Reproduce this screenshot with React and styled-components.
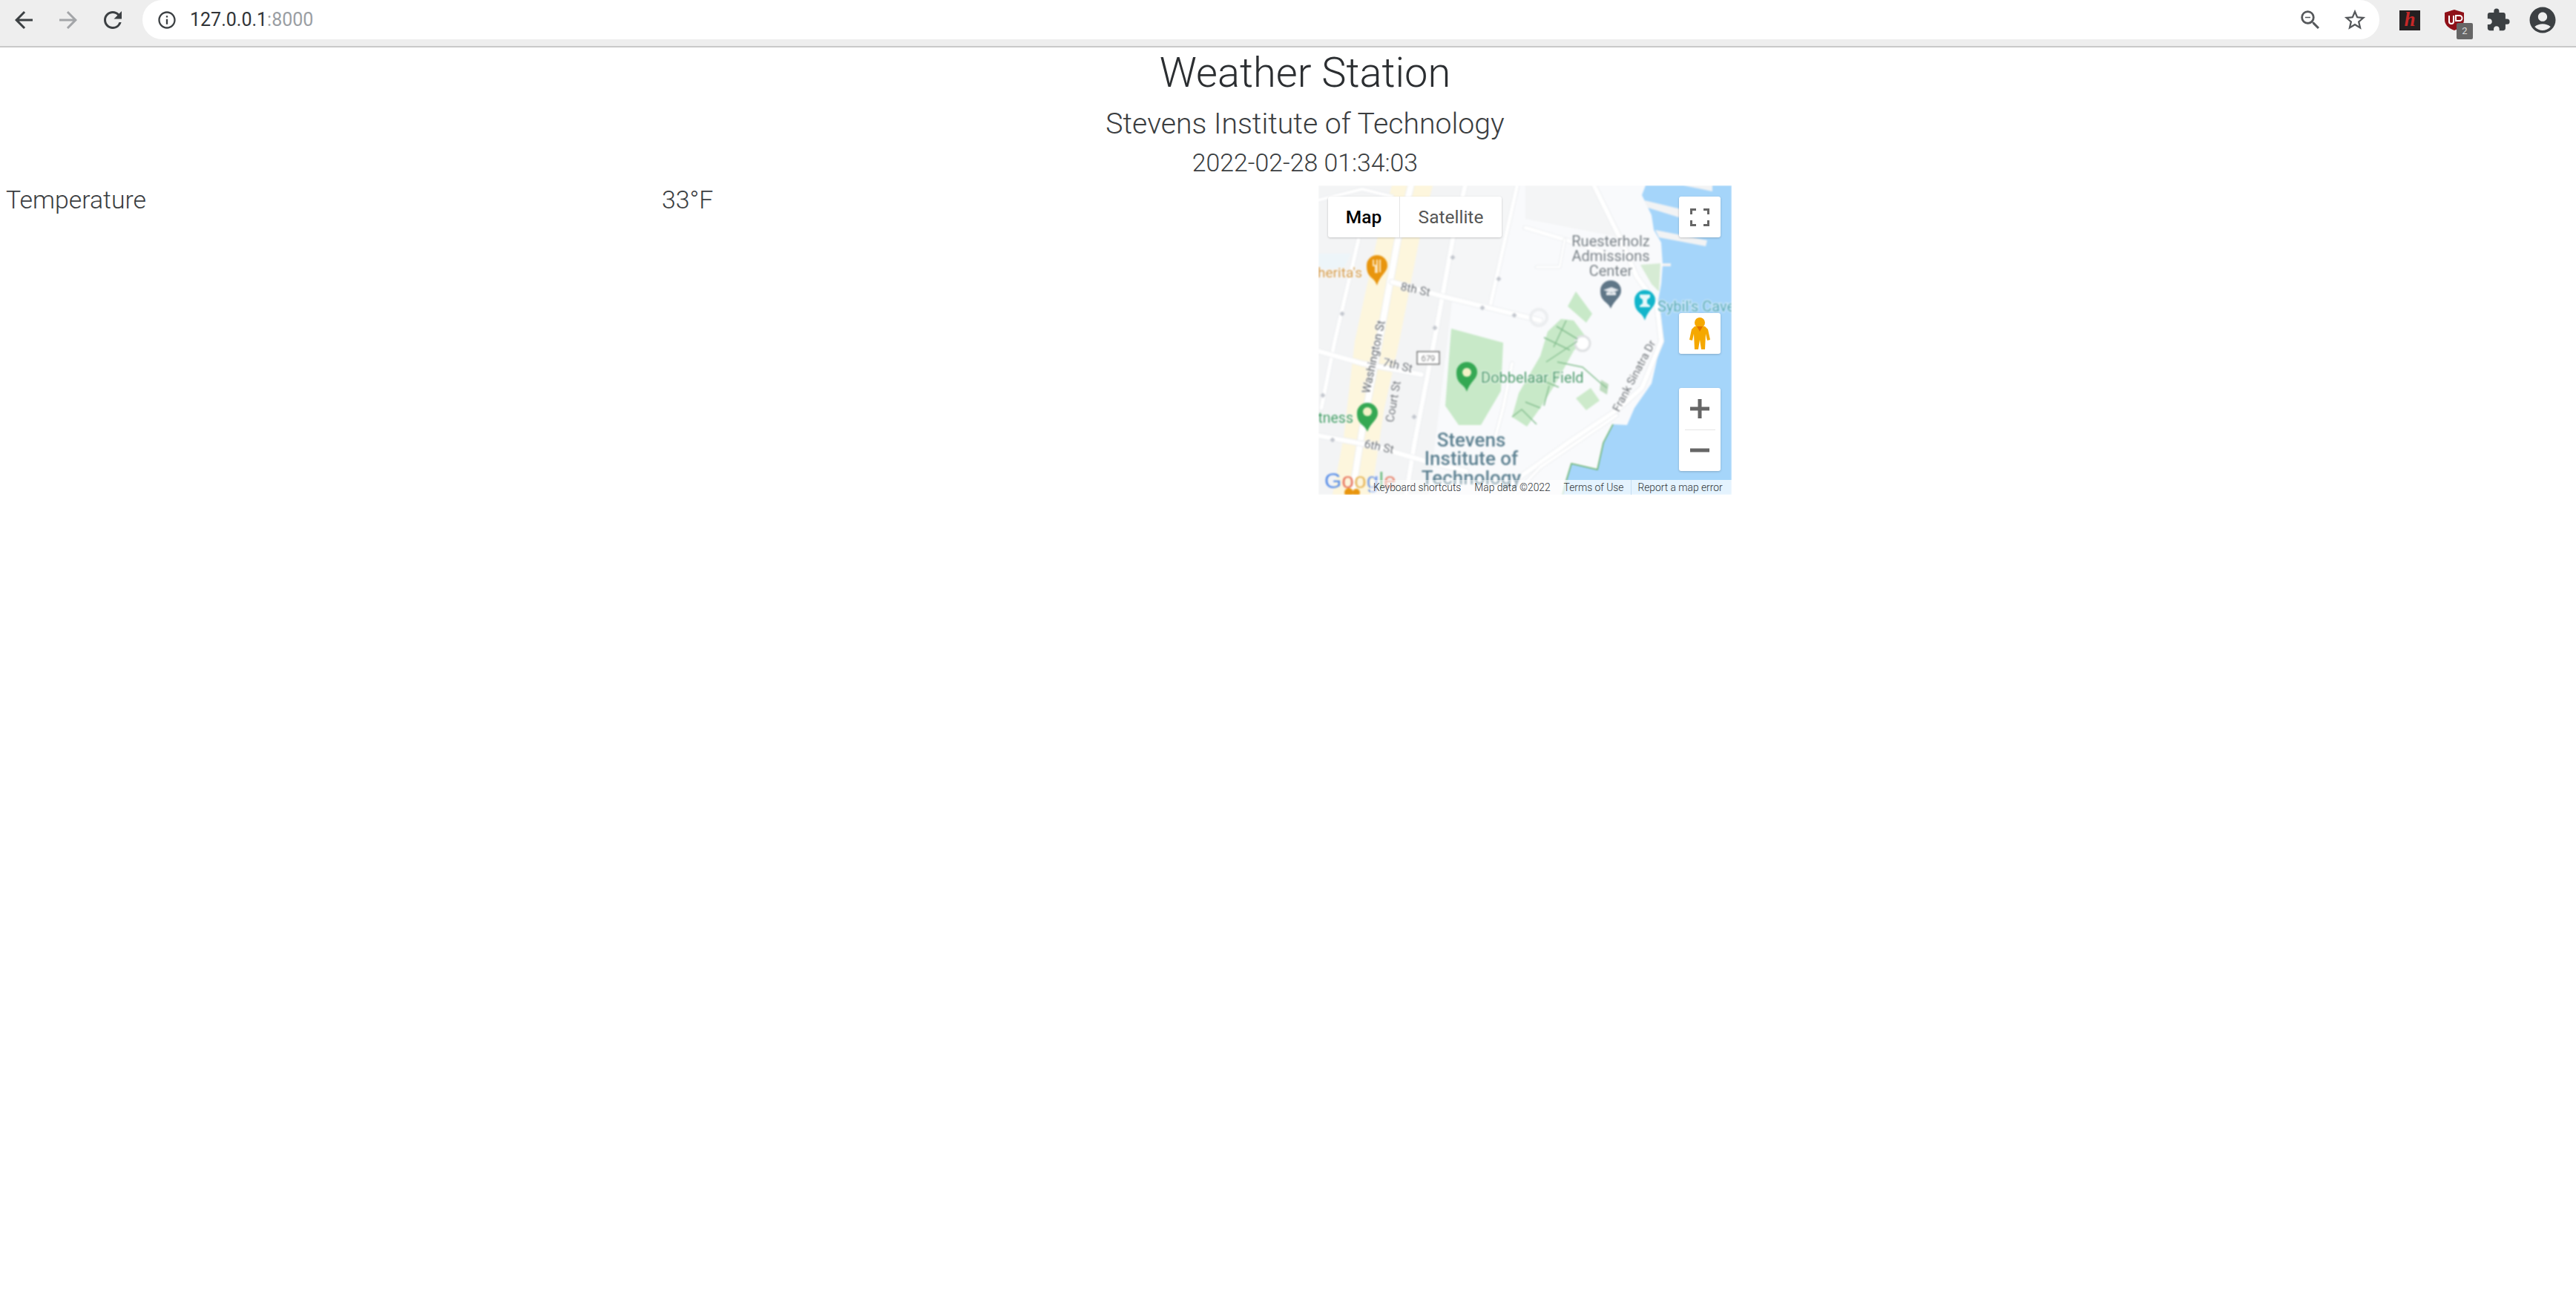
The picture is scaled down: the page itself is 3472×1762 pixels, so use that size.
import React from "react";
import styled, { createGlobalStyle } from "styled-components";
import {
  MdArrowBack,
  MdArrowForward,
  MdRefresh,
  MdInfoOutline,
  MdZoomOut,
  MdStarBorder,
  MdExtension,
  MdAccountCircle,
} from "react-icons/md";

const Global = createGlobalStyle`
  html, body { margin: 0; padding: 0; background: #fff; }
  body { font-family: Roboto, "Liberation Sans", sans-serif; overflow: hidden; }
`;

const Page = styled.div`
  width: 3472px;
  height: 1762px;
  display: flex;
  flex-direction: column;
  background: #fff;
`;

const Toolbar = styled.header`
  height: 62px;
  flex: none;
  display: flex;
  align-items: flex-start;
  background: #eeeeee;
  border-bottom: 2px solid #c9c9c9;
  box-sizing: content-box;
`;

const NavGroup = styled.nav`
  width: 192px;
  height: 54px;
  flex: none;
  display: flex;
  align-items: center;
  padding-left: 14px;
  gap: 24px;
  box-sizing: border-box;
`;

const ToolIcon = styled.span`
  width: ${(p) => p.$box || 36}px;
  height: 36px;
  flex: none;
  display: flex;
  align-items: center;
  justify-content: center;
  color: ${(p) => p.$color || "#3c4043"};
  font-size: ${(p) => p.$size || 36}px;
`;

const Omnibox = styled.div`
  width: 3015px;
  height: 53px;
  flex: none;
  display: flex;
  align-items: center;
  background: #fff;
  border-radius: 27px;
  padding: 0 15px 0 19px;
  box-sizing: border-box;
`;

const Url = styled.div`
  margin-left: 17px;
  flex: 1;
  font-size: 25px;
  font-weight: 400;
  color: #303336;
`;

const UrlPort = styled.span`
  color: #9a9ea3;
`;

const OmniActions = styled.div`
  display: flex;
  align-items: center;
  gap: 24px;
`;

const Extensions = styled.div`
  flex: 1;
  height: 54px;
  display: flex;
  align-items: center;
  padding-left: 27px;
`;

const HypoBadge = styled.div`
  width: 28px;
  height: 27px;
  flex: none;
  background: #231f20;
  color: #c62828;
  font: italic 700 27px/25px "Liberation Serif", serif;
  text-align: center;
`;

const ShieldWrap = styled.div`
  position: relative;
  width: 28px;
  height: 28px;
  flex: none;
  margin-left: 32px;
`;

const CountBadge = styled.span`
  position: absolute;
  left: 17px;
  top: 18px;
  width: 22px;
  height: 22px;
  background: #666;
  border-radius: 2px;
  color: #ddd;
  font-size: 13px;
  line-height: 22px;
  text-align: center;
`;

const PuzzleIcon = styled(ToolIcon)`
  margin-left: 27px;
`;

const AccountIcon = styled(ToolIcon)`
  margin-left: 21px;
  width: 42px;
  height: 42px;
`;

const Content = styled.main`
  flex: 1;
  color: #3a3d40;
  font-weight: 300;
`;

const Heading = styled.section`
  padding-left: 46px;
  text-align: center;
  height: 186px;
  box-sizing: border-box;
`;

const Title = styled.h1`
  margin: 0;
  padding-top: 4px;
  font-size: 56px;
  line-height: 60px;
  font-weight: 300;
  color: #2b2e31;
`;

const Subtitle = styled.h2`
  margin: 0;
  padding-top: 13px;
  font-size: 39.2px;
  line-height: 52px;
  font-weight: 300;
`;

const Stamp = styled.div`
  font-size: 33.8px;
  line-height: 54px;
  font-weight: 300;
`;

const Row = styled.section`
  display: grid;
  grid-template-columns: 884px 885px 557px;
  padding-left: 8px;
`;

const Cell = styled.div`
  font-size: 33.8px;
  line-height: 40px;
  font-weight: 300;
`;

const MapFrame = styled.div`
  position: relative;
  width: 557px;
  height: 417px;
  overflow: hidden;
  font-family: Roboto, sans-serif;
`;

const MapCanvas = styled.svg`
  display: block;
  width: 557px;
  height: 417px;
  filter: blur(0.9px);
  font-family: Roboto, sans-serif;
`;

const Card = styled.div`
  position: absolute;
  background: #fff;
  border-radius: 3px;
  box-shadow: 0 1px 3px rgba(0, 0, 0, 0.2);
  display: flex;
  align-items: center;
  justify-content: center;
`;

const TypeControl = styled(Card)`
  left: 13px;
  top: 15px;
  width: 234px;
  height: 55px;
`;

const TypeTab = styled.div`
  height: 100%;
  display: flex;
  align-items: center;
  justify-content: center;
  width: ${(p) => p.$w}px;
  font-size: 24.5px;
  font-weight: ${(p) => (p.$active ? 500 : 400)};
  color: ${(p) => (p.$active ? "#000" : "#565656")};
  border-right: ${(p) => (p.$active ? "1px solid #e6e6e6" : "none")};
  box-sizing: border-box;
`;

const FullscreenBtn = styled(Card)`
  left: 486px;
  top: 15px;
  width: 56px;
  height: 55px;
`;

const PegmanBtn = styled(Card)`
  left: 486px;
  top: 172px;
  width: 56px;
  height: 55px;
`;

const ZoomControl = styled(Card)`
  left: 486px;
  top: 273px;
  width: 56px;
  height: 112px;
  flex-direction: column;
`;

const ZoomKey = styled.div`
  flex: 1;
  width: 100%;
  display: flex;
  align-items: center;
  justify-content: center;
`;

const ZoomRule = styled.div`
  width: 41px;
  height: 1px;
  background: #e6e6e6;
`;

const Attribution = styled.div`
  position: absolute;
  left: 70px;
  right: 0;
  bottom: 0;
  height: 20px;
  display: flex;
  align-items: center;
  font-size: 13.8px;
  color: #2f3336;
  white-space: nowrap;
`;

const AttrItem = styled.span`
  height: 100%;
  flex: ${(p) => (p.$grow ? 1 : "none")};
  display: flex;
  align-items: center;
  padding: 0 ${(p) => p.$pad ?? 8}px 0 ${(p) => p.$padL ?? 4}px;
  background: rgba(255, 255, 255, ${(p) => p.$alpha ?? 0.6});
  border-left: ${(p) => (p.$rule ? "1px solid #c6def2" : "none")};
`;

const Pin = ({ x, y, tip, color, children }) => (
  <g>
    <path
      d={`M${x - 14} ${y} a14 14 0 1 1 28 0 c0 9 -10 13 -14 ${tip - y} c-4 ${14 - (tip - y)} -14 ${-9} -14 ${-(tip - y)}z`}
      fill={color}
    />
    {children}
  </g>
);

const Label = ({ x, y, size = 20, color, anchor = "start", rotate, weight = 400, children }) => (
  <text
    x={x}
    y={y}
    fontSize={size}
    fontWeight={weight}
    fill={color}
    textAnchor={anchor}
    stroke="#fff"
    strokeWidth="2"
    strokeOpacity=".7"
    paintOrder="stroke"
    transform={rotate ? `rotate(${rotate} ${x} ${y})` : undefined}
  >
    {children}
  </text>
);

const Road = ({ d, w = 7 }) => (
  <g fill="none" strokeLinecap="round" strokeLinejoin="round">
    <path d={d} stroke="#eceef0" strokeWidth={w + 2} />
    <path d={d} stroke="#fff" strokeWidth={w} />
  </g>
);

const MapDrawing = () => (
  <MapCanvas viewBox="1 0 557 417">
    <rect x="0" y="0" width="560" height="417" fill="#f9fafc" />
    {/* city blocks */}
    <polygon points="0,0 200,0 150,417 0,417" fill="#f3f4f5" />
    <polygon points="200,0 270,0 233,160 172,150" fill="#f5f6f7" />
    <polygon points="280,0 370,0 407,70 280,45" fill="#f4f5f6" />
    {/* yellow commercial strip */}
    <polygon points="100,0 155,0 137,73 110,210 90,300 72,417 20,417 35,340 50,210 80,73" fill="#fdf6dd" />
    <polygon points="0,92 45,92 35,112 0,112" fill="#edf5f9" />
    {/* water */}
    <polygon
      points="442,0 437,13 450,40 453,60 463,77 465,107 463,133 455,177 463,210 450,267 427,300 417,323 398,322 385,347 377,383 342,375 335,398 330,417 560,417 560,0"
      fill="#a5d5fa"
    />
    <polygon points="493,0 532,0 532,8" fill="#f2f3f4" />
    <polygon points="440,20 490,32 490,44 445,30" fill="#f2f3f4" />
    <polygon points="455,60 525,74 523,82 460,70" fill="#f2f3f4" />
    <polygon points="465,105 476,105 476,109 465,109" fill="#f2f3f4" />
    <path d="M398 322 L385 347 L377 383 L342 375 L335 398 L330 417" fill="none" stroke="#68b36f" strokeWidth="1.6" />
    {/* parks */}
    <polygon points="180,193 250,212 247,277 220,323 190,323 172,297" fill="#c8e9c8" />
    <polygon points="337,163 348,143 370,173 362,185" fill="#c8e9c8" />
    <polygon points="435,107 462,105 460,143 450,133" fill="#d6ebd4" />
    <polygon points="310,197 328,180 345,182 362,205 345,223 322,265 300,300 282,325 262,312 271,280 300,230" fill="#c8e9c8" />
    <polygon points="348,287 368,273 380,290 362,303" fill="#cdeacb" />
    <polygon points="382,262 392,268 390,282 380,276" fill="#bfdcbf" />
    {/* streets */}
    <Road d="M127 -5 L108 73 L83 210 L60 330 L45 425" w={8} />
    <Road d="M200 -5 L182 73 L157 210 L130 350 L118 425" w={6} />
    <Road d="M270 -5 L233 160" w={5} />
    <Road d="M55 73 L23 210 L5 300" w={5} />
    <Road d="M0 20 L60 5 L100 15" w={4} />
    <Road d="M100 130 L170 150 L280 177 L300 182" w={6} />
    <Road d="M0 223 L60 240 L140 255" w={6} />
    <Road d="M0 337 L70 350 L150 373 L200 385" w={6} />
    <Road d="M280 57 L333 73 L400 95" w={5} />
    <Road d="M333 73 L326 110 L295 110" w={3} />
    <Road d="M370 -5 L407 70 L430 123 L457 160 L463 210 L437 273 L403 303 L340 345 L270 395 L250 417" w={6} />
    <Road d="M403 310 L300 380 L265 417" w={4} />
    <Road d="M262 240 L250 300 L238 345" w={4} />
    <circle cx="357" cy="213" r="10" fill="#fff" stroke="#dfe1e3" strokeWidth="3" />
    <circle cx="298" cy="178" r="11" fill="none" stroke="#eceef0" strokeWidth="4" />
    <path d="M322 190 L350 207 M335 182 L318 218 M305 205 L340 222 M323 238 L357 245 L382 267 L390 273 M308 238 L350 210 M300 262 L325 272 M312 270 L305 297 M262 312 L275 302 L295 322 M300 300 L280 292" fill="none" stroke="#86bf90" strokeWidth="1.5" />
    {/* direction marks */}
    <g fill="#c3c7ce">
      {[[182, 97], [244, 126], [222, 165], [265, 175], [158, 192], [33, 173], [130, 312], [20, 343], [7, 283]].map(([x, y]) => (
        <rect key={`${x}-${y}`} x={x - 2.5} y={y - 2.5} width="5" height="5" transform={`rotate(45 ${x} ${y})`} />
      ))}
    </g>
    {/* street labels */}
    <Label x={111} y={141} size={15.5} color="#6a6f75" rotate={12}>8th St</Label>
    <Label x={70} y={281} size={15.5} color="#5e6369" rotate={-78}>Washington St</Label>
    <Label x={87} y={243} size={15.5} color="#6a6f75" rotate={13}>7th St</Label>
    <Label x={102} y={320} size={15.5} color="#6a6f75" rotate={-80}>Court St</Label>
    <Label x={62} y={353} size={15.5} color="#6a6f75" rotate={12}>6th St</Label>
    <Label x={406} y={306} size={15} color="#6a6f75" rotate={-62}>Frank Sinatra Dr</Label>
    <rect x="134" y="224" width="30" height="17" fill="#fff" stroke="#555" strokeWidth="1.2" />
    <text x="149" y="237" fontSize="11" textAnchor="middle" fill="#444">679</text>
    {/* POIs */}
    <Label x={60} y={124} size={19} color="#d49a48" anchor="end">Margherita's</Label>
    <Pin x={80} y={108} tip={135} color="#e8950e">
      <path d="M75 100 v8 h3 v9 h2 v-17 M84 100 v17" fill="none" stroke="#fde7c0" strokeWidth="2" />
    </Pin>
    <Label x={395} y={82} size={20} color="#767e85" anchor="middle">Ruesterholz</Label>
    <Label x={395} y={102} size={20} color="#767e85" anchor="middle">Admissions</Label>
    <Label x={395} y={122} size={20} color="#767e85" anchor="middle">Center</Label>
    <Pin x={395} y={142} tip={166} color="#5f7687">
      <path d="M385 141 L396 137 L406 141 L396 145z M389 144 v4 h13 v-4" fill="#e6eaee" />
    </Pin>
    <Label x={458} y={170} size={20} color="#4fa6b4">Sybil's Cave</Label>
    <Pin x={441} y={155} tip={182} color="#12b5cb">
      <path d="M434 147 h14 v4 l-4 3 v5 l4 3 v2 h-14 v-2 l4 -3 v-5 l-4 -3z" fill="#e6f8fa" />
    </Pin>
    <Label x={220} y={266} size={20} color="#4c9a6c">Dobbelaar Field</Label>
    <Pin x={201} y={252} tip={278} color="#34a853">
      <circle cx="201" cy="252" r="6" fill="#f4f2c8" />
    </Pin>
    <Label x={48} y={320} size={19.5} color="#3f9a63" anchor="end">Fitness</Label>
    <Pin x={67} y={307} tip={332} color="#34a853">
      <circle cx="67" cy="305" r="6" fill="#f4f2c8" />
    </Pin>
    <Label x={207} y={352} size={26} color="#5b7f90" anchor="middle" weight={500}>Stevens</Label>
    <Label x={207} y={377} size={26} color="#5b7f90" anchor="middle" weight={500}>Institute of</Label>
    <Label x={207} y={403} size={26} color="#5b7f90" anchor="middle" weight={500}>Technology</Label>
    {/* logo */}
    <text x="9" y="408" fontSize="30" fontWeight="500" fontFamily="'Liberation Sans', sans-serif">
      <tspan fill="#5a8fe8">G</tspan>
      <tspan fill="#e8765f">o</tspan>
      <tspan fill="#e8b95f">o</tspan>
      <tspan fill="#7a9fe8">g</tspan>
      <tspan fill="#6cbb7f">l</tspan>
      <tspan fill="#e8866f">e</tspan>
    </text>
    <circle cx="42" cy="414" r="6" fill="#e8950e" />
    <circle cx="52" cy="414" r="5" fill="#e8950e" />
  </MapCanvas>
);

const Pegman = () => (
  <svg width="30" height="44" viewBox="0 0 30 44">
    <circle cx="15" cy="7" r="7" fill="#f5a800" />
    <path d="M8 12 h14 l4 4 l3 14 l-4 1 l-2 -9 l-1 21 h-5 l-2 -13 l-2 13 h-5 l-1 -21 l-2 9 l-4 -1 l3 -14z" fill="#f5a800" />
    <path d="M11 12 h8 l-4 7z" fill="#e37400" />
  </svg>
);

const Corners = () => (
  <svg width="26" height="24" viewBox="0 0 26 24" fill="none" stroke="#666" strokeWidth="3">
    <path d="M1.5 8 V1.5 H8 M18 1.5 H24.5 V8 M24.5 16 V22.5 H18 M8 22.5 H1.5 V16" />
  </svg>
);

const Shield = () => (
  <svg width="28" height="28" viewBox="0 0 28 28">
    <path d="M14 0 L27 4 V14 C27 21 20 26 14 28 C8 26 1 21 1 14 V4z" fill="#8f1018" />
    <path d="M7 8 v8 a3 3 0 0 0 6 0 v-8" fill="none" stroke="#fff" strokeWidth="2" />
    <path d="M16 8 h5 a3 3 0 0 1 0 7 h-5z" fill="none" stroke="#fff" strokeWidth="2" />
  </svg>
);

export default function App() {
  return (
    <Page>
      <Global />
      <Toolbar>
        <NavGroup>
          <ToolIcon><MdArrowBack /></ToolIcon>
          <ToolIcon $color="#a3a5a8"><MdArrowForward /></ToolIcon>
          <ToolIcon><MdRefresh /></ToolIcon>
        </NavGroup>
        <Omnibox>
          <ToolIcon $size={28} $box={28}><MdInfoOutline /></ToolIcon>
          <Url>127.0.0.1<UrlPort>:8000</UrlPort></Url>
          <OmniActions>
            <ToolIcon $size={34} $color="#55585b"><MdZoomOut /></ToolIcon>
            <ToolIcon $size={34} $color="#55585b"><MdStarBorder /></ToolIcon>
          </OmniActions>
        </Omnibox>
        <Extensions>
          <HypoBadge>h</HypoBadge>
          <ShieldWrap>
            <Shield />
            <CountBadge>2</CountBadge>
          </ShieldWrap>
          <PuzzleIcon $size={34}><MdExtension /></PuzzleIcon>
          <AccountIcon $size={42}><MdAccountCircle /></AccountIcon>
        </Extensions>
      </Toolbar>
      <Content>
        <Heading>
          <Title>Weather Station</Title>
          <Subtitle>Stevens Institute of Technology</Subtitle>
          <Stamp>2022-02-28 01:34:03</Stamp>
        </Heading>
        <Row>
          <Cell>Temperature</Cell>
          <Cell>33°F</Cell>
          <MapFrame>
            <MapDrawing />
            <TypeControl>
              <TypeTab $active $w={97}>Map</TypeTab>
              <TypeTab $w={137}>Satellite</TypeTab>
            </TypeControl>
            <FullscreenBtn><Corners /></FullscreenBtn>
            <PegmanBtn><Pegman /></PegmanBtn>
            <ZoomControl>
              <ZoomKey>
                <svg width="26" height="26" viewBox="0 0 26 26"><path d="M0 13 H26 M13 0 V26" stroke="#666" strokeWidth="5" /></svg>
              </ZoomKey>
              <ZoomRule />
              <ZoomKey>
                <svg width="26" height="6" viewBox="0 0 26 6"><path d="M0 3 H26" stroke="#666" strokeWidth="5" /></svg>
              </ZoomKey>
            </ZoomControl>
            <Attribution>
              <AttrItem $alpha={0.45} $padL={4} $pad={18}>Keyboard shortcuts</AttrItem>
              <AttrItem $alpha={0.45} $padL={0} $pad={14}>Map data ©2022</AttrItem>
              <AttrItem $alpha={0.7} $padL={4} $pad={10}>Terms of Use</AttrItem>
              <AttrItem $alpha={0.7} $rule $grow $padL={8} $pad={0}>Report a map error</AttrItem>
            </Attribution>
          </MapFrame>
        </Row>
      </Content>
    </Page>
  );
}
